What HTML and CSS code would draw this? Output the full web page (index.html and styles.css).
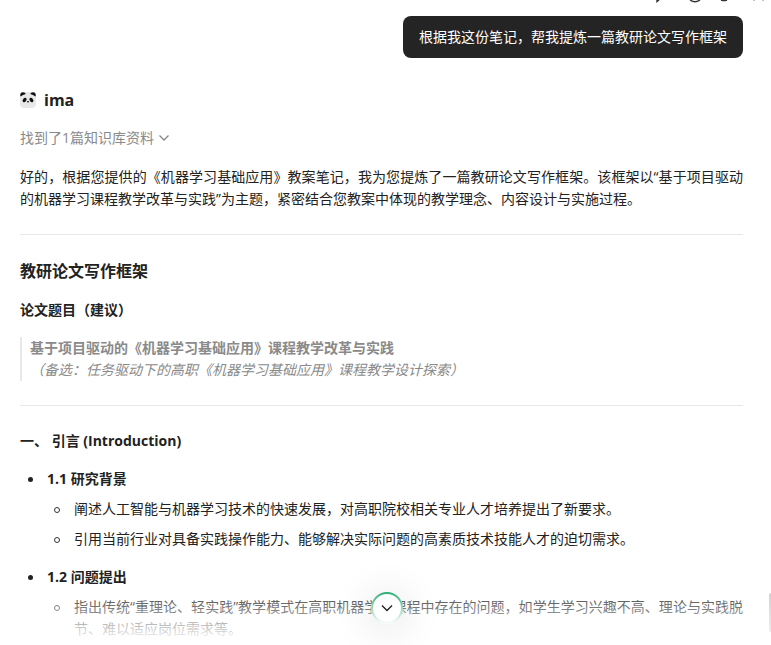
FILE: index.html
```html
<!DOCTYPE html>
<html lang="zh-CN">
<head>
<meta charset="utf-8">
<title>ima</title>
<link rel="stylesheet" href="styles.css">
</head>
<body>
<main class="chat">
  <nav class="toolbar" aria-label="工具">
    <svg viewBox="0 0 120 3" width="120" height="3" fill="none" stroke="#333" stroke-width="1.4">
      <path d="M6 0v1.500l2-1.500"/>
      <path d="M39 0q5 3.500 10 0"/>
      <path d="M70 0q3 1 6 0"/>
      <path d="M103 0v1M112 0v1" stroke="#aaa"/>
    </svg>
  </nav>
  <p class="bubble">根据我这份笔记，帮我提炼一篇教研论文写作框架</p>
  <article class="answer">
    <header class="author">
      <svg viewBox="0 0 16 16" width="16" height="16" aria-hidden="true">
        <rect width="16" height="16" rx="4" fill="#e8e8e8"/>
        <path d="M.5 4.500Q-.5.500 3 .3q2.500 0 2.700 1.700Q3 2.500 .5 4.500zM15.500 4.500Q16.500.5 13 .3q-2.500 0-2.700 1.700Q13 2.500 15.500 4.500z" fill="#111"/>
        <ellipse cx="4.600" cy="8" rx="1.700" ry="2.500" transform="rotate(35 4.600 8)" fill="#111"/>
        <ellipse cx="11.400" cy="8" rx="1.700" ry="2.500" transform="rotate(-35 11.400 8)" fill="#111"/>
        <ellipse cx="8" cy="9.700" rx="1.100" ry=".7" fill="#111"/>
      </svg>
      <span>ima</span>
    </header>
    <button class="sources" type="button">找到了1篇知识库资料
      <svg viewBox="0 0 10 6" width="10" height="6" fill="none" stroke="#888" stroke-width="1.300" aria-hidden="true"><path d="M.5.5 5 5 9.500.5"/></svg>
    </button>
    <p>好的，根据您提供的《机器学习基础应用》教案笔记，我为您提炼了一篇教研论文写作框架。该框架以“基于项目驱动的机器学习课程教学改革与实践”为主题，紧密结合您教案中体现的教学理念、内容设计与实施过程。</p>
    <hr>
    <h2>教研论文写作框架</h2>
    <h3>论文题目（建议）</h3>
    <blockquote>
      <strong>基于项目驱动的《机器学习基础应用》课程教学改革与实践</strong><br>
      <em>（备选：任务驱动下的高职《机器学习基础应用》课程教学设计探索）</em>
    </blockquote>
    <hr>
    <h3>一、 引言 (Introduction)</h3>
    <ul class="outline">
      <li><strong>1.1 研究背景</strong>
        <ul>
          <li>阐述人工智能与机器学习技术的快速发展，对高职院校相关专业人才培养提出了新要求。</li>
          <li>引用当前行业对具备实践操作能力、能够解决实际问题的高素质技术技能人才的迫切需求。</li>
        </ul>
      </li>
      <li><strong>1.2 问题提出</strong>
        <ul>
          <li>指出传统“重理论、轻实践”教学模式在高职机器学习课程中存在的问题，如学生学习兴趣不高、理论与实践脱节、难以适应岗位需求等。</li>
        </ul>
      </li>
    </ul>
  </article>
  <div class="fade"></div>
  <button class="to-bottom" type="button" aria-label="滚动到底部">
    <svg viewBox="0 0 32 32" width="32" height="32" fill="none" aria-hidden="true">
      <defs>
        <linearGradient id="ring" x1="0" y1="0" x2="0" y2="1">
          <stop offset="0" stop-color="#2fae75"/>
          <stop offset=".45" stop-color="#8fd2b4"/>
          <stop offset="1" stop-color="#f6fbf8"/>
        </linearGradient>
      </defs>
      <circle cx="16" cy="16" r="15" fill="#fff" stroke="url(#ring)" stroke-width="2"/>
      <path d="M11 13.500l5 5 5-5" stroke="#222" stroke-width="1.400"/>
    </svg>
  </button>
  <div class="side-handle"></div>
</main>
</body>
</html>
```
FILE: styles.css
```css
*,
*::before {
  box-sizing: border-box;
}

body {
  margin: 0;
  background: #fff;
  color: #222;
  font: 14px/22px "Open Sans", "Noto Sans CJK SC", sans-serif;
}

.chat {
  position: relative;
  display: flex;
  flex-direction: column;
  height: 100vh;
  overflow: hidden;
  padding: 16px 28px 0 20px;
}

.toolbar {
  position: absolute;
  top: 0;
  right: 0;
  display: flex;
}

.bubble {
  align-self: flex-end;
  margin: 0;
  padding: 10px 16px;
  border-radius: 8px;
  background: #242424;
  color: #fff;
}

.answer {
  padding-top: 31px;
  text-align: justify;
}

.author {
  display: flex;
  align-items: center;
  gap: 8px;
  font-size: 16px;
  font-weight: 700;
}

.sources {
  display: flex;
  align-items: center;
  gap: 5px;
  margin: 16px 0 17px;
  padding: 0;
  border: 0;
  background: none;
  color: #8a8a8a;
  font: inherit;
}

p {
  margin: 0;
}

hr {
  margin: 24px 0;
  border: 0;
  border-top: 1px solid #e8e8e8;
}

h2,
h3 {
  margin: 0 0 16px;
  font-size: 14px;
  line-height: 22px;
  font-weight: 700;
}

h2 {
  font-size: 16px;
  line-height: 24px;
}

blockquote {
  margin: 0;
  padding-left: 8px;
  border-left: 2px solid #e8e8e8;
  color: #8a8a8a;
  text-align: left;
}

ul {
  margin: 0;
  padding: 0;
  list-style: none;
}

li {
  position: relative;
  padding-left: 27px;
}

li::before {
  content: "";
  position: absolute;
  top: 9px;
  left: 8px;
  width: 5px;
  height: 5px;
  border-radius: 50%;
  background: #222;
}

.outline > li {
  margin-bottom: 16px;
}

.outline ul li {
  margin-top: 8px;
}

.outline ul li::before {
  left: 7px;
  width: 6px;
  height: 6px;
  border: 1px solid #333;
  background: none;
}

.fade {
  position: absolute;
  right: 0;
  bottom: 0;
  left: 0;
  height: 60px;
  background: linear-gradient(rgba(255, 255, 255, 0), #fff 95%);
}

.to-bottom {
  position: absolute;
  bottom: 21px;
  left: 50%;
  width: 32px;
  height: 32px;
  margin-left: -15px;
  padding: 0;
  border: 0;
  border-radius: 50%;
  background: #fff;
  box-shadow: 0 4px 40px rgba(0, 0, 0, 0.16);
}

.to-bottom svg {
  display: block;
}

.side-handle {
  position: absolute;
  right: 0;
  bottom: 13px;
  width: 2px;
  height: 39px;
  border-radius: 2px 0 0 2px;
  background: linear-gradient(#d0d0d0, #eee);
}
```
